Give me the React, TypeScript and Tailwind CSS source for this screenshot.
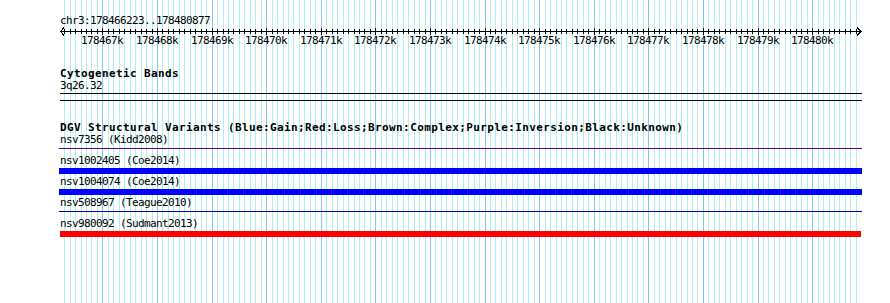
import React from "react";

const START = 178466223;
const END = 178480877;
const LEFT = 60;
const WIDTH = 800;
const px = (p: number) => LEFT + ((p - START) * WIDTH) / (END - START);

const ticks: number[] = [];
for (let p = Math.ceil(START / 100) * 100; p <= END; p += 100) ticks.push(p);

const rows = [
  { label: "nsv7356 (Kidd2008)", kind: "thin", color: "#52008c" },
  { label: "nsv1002405 (Coe2014)", kind: "bar", color: "#0000ff" },
  { label: "nsv1004074 (Coe2014)", kind: "bar", color: "#0000ff" },
  { label: "nsv508967 (Teague2010)", kind: "thin", color: "#0000b4" },
  { label: "nsv980092 (Sudmant2013)", kind: "red", color: "#ff0000" },
];

function Grid() {
  return (
    <svg className="absolute inset-0" width={890} height={303} shapeRendering="crispEdges">
      {ticks.map((p) => {
        const x = Math.round(px(p)) + 0.5;
        const major = p % 1000 === 0;
        return (
          <line
            key={p}
            x1={x}
            x2={x}
            y1={0}
            y2={303}
            stroke={major ? "#87c6f0" : "#afeeee"}
            strokeWidth={1}
          />
        );
      })}
    </svg>
  );
}

function Ruler() {
  const y = 4.5;
  const endX = 801;
  return (
    <svg width={810} height={20} className="block" shapeRendering="crispEdges">
      <line x1={0} x2={endX} y1={y} y2={y} stroke="#000" />
      <polyline points={`4,0.5 0.5,${y} 4,8.5`} fill="none" stroke="#000" />
      <polyline points={`${endX - 4},0.5 ${endX},${y} ${endX - 4},8.5`} fill="none" stroke="#000" />
      {ticks.map((p) => {
        const x = Math.round(px(p)) - LEFT + 0.5;
        const major = p % 1000 === 0;
        return (
          <line
            key={p}
            x1={x}
            x2={x}
            y1={major ? 1 : 2}
            y2={major ? 8 : 7}
            stroke="#000"
          />
        );
      })}
      {ticks
        .filter((p) => p % 1000 === 0)
        .map((p) => {
          const x = Math.round(px(p)) - LEFT - 21;
          return (
            <text
              key={p}
              x={x}
              y={17}
              fontFamily="'DejaVu Sans Mono', monospace"
              fontSize={11}
              letterSpacing={-0.62}
              fill="#000"
            >
              {`${p / 1000}k`}
            </text>
          );
        })}
    </svg>
  );
}

const txt =
  "font-['DejaVu_Sans_Mono',monospace] text-[11px] leading-[12px] tracking-[-0.62px] text-black whitespace-nowrap";
const bold =
  "font-['DejaVu_Sans_Mono',monospace] font-bold text-[11px] leading-[12px] tracking-[0.38px] text-black whitespace-nowrap";

export default function App() {
  return (
    <div className="relative w-[890px] h-[303px] bg-white overflow-hidden">
      <Grid />
      <div className="relative pl-[60px] pt-[15px]">
        <div className={txt}>chr3:178466223..178480877</div>
        <Ruler />

        <div className="mt-[21px]">
          <div className={bold}>Cytogenetic Bands</div>
          <div className={txt}>3q26.32</div>
          <div className="mt-[1px] h-[8px] w-[802px] border-y border-black" />
        </div>

        <div className="mt-[21px]">
          <div className={bold}>
            DGV Structural Variants (Blue:Gain;Red:Loss;Brown:Complex;Purple:Inversion;Black:Unknown)
          </div>
          {rows.map((r) => (
            <div key={r.label} className="h-[21px]">
              <div className={txt}>{r.label}</div>
              <div className="mt-[1px] h-[6px]">
                {r.kind === "thin" && (
                  <div className="mt-[2px] h-[1px] -ml-[1px] w-[803px]" style={{ backgroundColor: r.color }} />
                )}
                {r.kind === "bar" && <div className="h-[6px] -ml-[1px] w-[803px] bg-[#0000ff]" />}
                {r.kind === "red" && <div className="h-[6px] w-[801px] bg-[#ff0000]" />}
              </div>
            </div>
          ))}
        </div>
      </div>
    </div>
  );
}
